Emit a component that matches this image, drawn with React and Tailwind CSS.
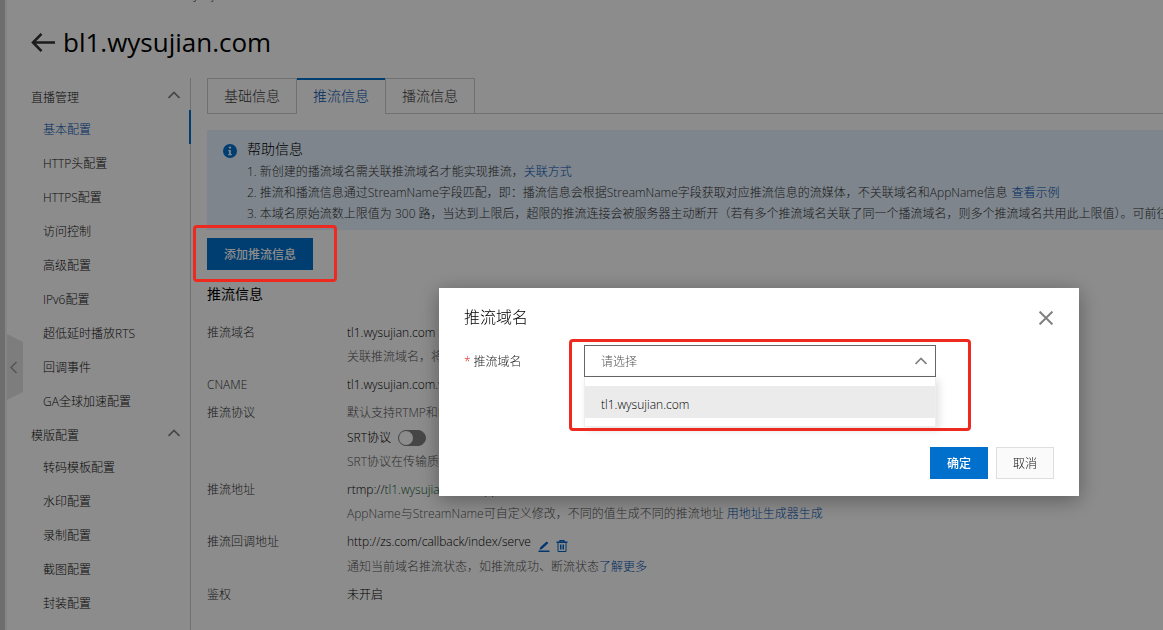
import { useState } from 'react';

const menu = [
  {
    title: '直播管理',
    items: ['基本配置', 'HTTP头配置', 'HTTPS配置', '访问控制', '高级配置', 'IPv6配置', '超低延时播放RTS', '回调事件', 'GA全球加速配置'],
  },
  {
    title: '模版配置',
    items: ['转码模板配置', '水印配置', '录制配置', '截图配置', '封装配置'],
  },
];

const tabs = ['基础信息', '推流信息', '播流信息'];

function ChevronUp() {
  return (
    <svg className="w-3 h-3" viewBox="0 0 12 12" fill="none" stroke="currentColor" strokeWidth="1.7">
      <path d="M0.5 9 L6 3.4 L11.5 9" />
    </svg>
  );
}

function Sidebar() {
  const [active, setActive] = useState('基本配置');

  return (
    <nav className="w-[184px] shrink-0 border-r border-[#cccccc] pl-6">
      {menu.map((group) => (
        <div key={group.title}>
          <button className="flex h-8 w-full items-center justify-between pt-2 pr-2.5 text-[#111111]">
            {group.title}
            <span className="pb-1.5 text-[#808080]"><ChevronUp /></span>
          </button>
          <ul>
            {group.items.map((item) => (
              <li key={item}>
                <a
                  href="#"
                  onClick={() => setActive(item)}
                  className={`-mr-px flex h-[34px] items-center pl-3 pt-1.5 ${item === active ? 'border-r-2 border-[#0070cc] text-[#0050b0]' : 'text-[#111111]'}`}
                >
                  {item}
                </a>
              </li>
            ))}
          </ul>
        </div>
      ))}
    </nav>
  );
}

function Tabs() {
  const [current, setCurrent] = useState('推流信息');

  return (
    <div className="flex h-9">
      {tabs.map((tab) => (
        <button
          key={tab}
          onClick={() => setCurrent(tab)}
          className={`px-4 text-sm ${
            tab === current
              ? 'border-y-2 border-t-[#0070cc] border-b-transparent text-[#0050b0]'
              : 'border border-[#cccccc] text-[#333333]'
          }`}
        >
          {tab}
        </button>
      ))}
      <div className="grow border-b border-[#cccccc]" />
    </div>
  );
}

function HelpPanel() {
  return (
    <section className="mt-4 flex h-[100px] bg-[#e6f2ff] pl-4 whitespace-nowrap text-[#333333]">
      <svg className="mt-[14px] mr-[10px] w-[14px] h-[14px] shrink-0" viewBox="0 0 14 14">
        <circle cx="7" cy="7" r="7" fill="#0070cc" />
        <circle cx="7" cy="3.6" r="1.2" fill="#e6f2ff" />
        <path d="M5.2 6h2.7v4h1v1.2H5.1V10h1V7.2h-.9z" fill="#e6f2ff" />
      </svg>
      <div className="pt-2">
        <h2 className="pb-px text-sm leading-[22px] text-black">帮助信息</h2>
        <p className="leading-[21px]">
          1. 新创建的播流域名需关联推流域名才能实现推流，<a href="#" className="text-[#0050b0]">关联方式</a>
        </p>
        <p className="leading-[21px]">
          2. 推流和播流信息通过StreamName字段匹配，即：播流信息会根据StreamName字段获取对应推流信息的流媒体，不关联域名和AppName信息
          <a href="#" className="ml-1 text-[#0050b0]">查看示例</a>
        </p>
        <p className="leading-[21px]">
          3. 本域名原始流数上限值为 300 路，当达到上限后，超限的推流连接会被服务器主动断开（若有多个推流域名关联了同一个播流域名，则多个推流域名共用此上限值）。可前往
        </p>
      </div>
    </section>
  );
}

function Row({ label, children }) {
  return (
    <div className="flex leading-6">
      <dt className="w-[140px] shrink-0 text-[#333333]">{label}</dt>
      <dd className="min-w-0 text-black">{children}</dd>
    </div>
  );
}

function Hint({ children }) {
  return <p className="whitespace-nowrap text-[#555555]">{children}</p>;
}

function StreamInfo() {
  return (
    <dl className="mt-4 flex flex-col gap-1">
      <Row label="推流域名">
        <p>tl1.wysujian.com</p>
        <Hint>关联推流域名，将</Hint>
      </Row>
      <Row label="CNAME">tl1.wysujian.com.w</Row>
      <Row label="推流协议">
        <Hint>默认支持RTMP和RTS</Hint>
        <label className="flex h-[25px] items-center">
          SRT协议
          <input type="checkbox" className="peer sr-only" />
          <span className="ml-[7px] flex h-4 w-7 rounded-full border border-[#808080] bg-[#808080]">
            <span className="w-3.5 h-3.5 rounded-full bg-white" />
          </span>
        </label>
        <Hint>SRT协议在传输质</Hint>
      </Row>
      <Row label="推流地址">
        <p>
          rtmp://<span className="text-[#0d5c30]">tl1.wysujian.com</span>/AppName/StreamName
        </p>
        <Hint>
          AppName与StreamName可自定义修改，不同的值生成不同的推流地址 <a href="#" className="text-[#0050b0]">用地址生成器生成</a>
        </Hint>
      </Row>
      <Row label="推流回调地址">
        <div className="flex h-[25px]">
          http://zs.com/callback/index/serve
          <button aria-label="编辑" className="ml-[7px] pt-1.5 text-[#0064c8]">
            <svg className="w-3 h-3" viewBox="0 0 12 12" fill="currentColor">
              <path d="M0.5 10.6h11V12h-11zM1.4 9.8l.9-2.6L8.6 1.4l1.8 1.6L4 9z" />
            </svg>
          </button>
          <button aria-label="删除" className="ml-1.5 pt-1.5 text-[#0064c8]">
            <svg className="w-3 h-3" viewBox="0 0 12 12" fill="none" stroke="currentColor">
              <path d="M0.5 2.2h11M4 2.2V.6h4v1.6" strokeWidth="1.4" />
              <path d="M2 3v8.5h8V3M4.5 4.5v5M6 4.5v5M7.5 4.5v5" />
            </svg>
          </button>
        </div>
        <Hint>
          通知当前域名推流状态，如推流成功、断流状态<a href="#" className="text-[#0050b0]">了解更多</a>
        </Hint>
      </Row>
      <Row label="鉴权">未开启</Row>
    </dl>
  );
}

function DomainDialog() {
  return (
    <div className="fixed inset-0 z-20 flex items-start justify-end bg-black/45 pt-72 pr-[84px]">
      <div role="dialog" aria-labelledby="dialog-title" className="w-[640px] bg-white px-[25px] pt-4 pb-[17px] shadow-[0_4px_20px_rgba(0,0,0,0.35)]">
        <div className="flex h-[26px] items-center justify-between">
          <h2 id="dialog-title" className="text-base font-light text-black">推流域名</h2>
          <button aria-label="关闭" className="mt-0.5 mr-px text-[#808080]">
            <svg className="block w-3.5 h-3.5" viewBox="0 0 14 14" fill="none" stroke="currentColor" strokeWidth="2">
              <path d="M0.6 0.6l12.8 12.8M13.4 0.6L0.6 13.4" />
            </svg>
          </button>
        </div>

        <div className="mt-[15px] flex">
          <label htmlFor="domain" className="w-[120px] pt-px leading-8 text-[#222222]">
            <span className="mr-[3px] text-[#d93026]">*</span>推流域名
          </label>
          <div className="relative w-[352px]">
            <select id="domain" className="block h-8 w-full appearance-none border border-[#666666] bg-white px-4 pt-0.5 text-[#555555]">
              <option>请选择</option>
            </select>
            <span className="pointer-events-none absolute top-2.5 right-[9px] text-[#808080]"><ChevronUp /></span>
            <ul role="listbox" className="absolute top-8 left-0 w-full border border-t-0 border-[#eeeeee] bg-white py-2 pt-[9px] shadow-[3px_3px_8px_rgba(0,0,0,0.12)]">
              <li role="option" aria-selected="true" className="h-8 bg-[#ebebeb] px-4 pt-1 leading-[30px] text-black">
                tl1.wysujian.com
              </li>
            </ul>
            {/* Highlight */}
            <div className="pointer-events-none absolute -top-1.5 -left-[15px] h-[92px] w-[402px] rounded border-3 border-[#ee2a20]" />
          </div>
        </div>

        <div className="mt-[69px] flex justify-end gap-2">
          <button className="h-8 w-[58px] bg-[#0070cc] pt-0.5 font-medium text-white">确定</button>
          <button className="h-8 w-[58px] border border-[#dedede] bg-[#fafafa] pt-0.5 text-[#111111]">取消</button>
        </div>
      </div>
    </div>
  );
}

export default function App() {
  return (
    <div className="flex h-screen overflow-hidden bg-white font-['Open_Sans','Noto_Sans_CJK_SC',sans-serif] text-xs font-light">
      <div className="w-[7px] shrink-0 border-r-2 border-[#f2f2f2] bg-[#c8c8c8]" />
      <div className="relative min-w-0 grow">
        {/* Breadcrumb, scrolled almost out of view */}
        <div className="flex h-[2px] items-end overflow-hidden pl-[158px] text-[#333333]">
          <span className="leading-[14px]">bl1.wysujian.com</span>
        </div>

        <header className="flex h-[76px] items-center gap-2 pl-6 pb-0.5 pt-1.5 text-black">
          <button aria-label="返回" className="text-[#333333]">
            <svg className="w-6 h-5" viewBox="0 0 24 20" fill="none" stroke="currentColor" strokeWidth="2.6">
              <path d="M2 10.5H24M10.5 1.9L2 10.5l8.5 8.6" />
            </svg>
          </button>
          <h1 className="text-[26px] leading-9 font-normal">bl1.wysujian.com</h1>
        </header>

        <div className="flex h-full">
          <Sidebar />
          <main className="min-w-0 grow overflow-x-clip pl-4">
            <Tabs />
            <HelpPanel />
            <div className="relative mt-2 w-fit">
              <button className="block h-8 bg-[#0070cc] px-[17px] pt-0.5 font-medium text-white">添加推流信息</button>
              {/* Highlight */}
              <div className="pointer-events-none absolute -top-[13px] -left-3.5 z-30 h-[57px] w-36 rounded border-3 border-[#ee2a20]" />
            </div>
            <h3 className="mt-[13px] text-sm leading-[22px] font-normal text-black">推流信息</h3>
            <StreamInfo />
          </main>
        </div>

        {/* Sidebar collapse handle */}
        <button aria-label="收起菜单" className="absolute top-[334px] left-0 h-[66px] w-4">
          <svg className="w-4 h-[66px]" viewBox="0 0 16 66" fill="none">
            <path d="M0 0L16 8v50L0 66z" fill="#e4e4e4" />
            <path d="M9.5 28L4 33.5 9.5 39" stroke="#999999" strokeWidth="1.5" />
          </svg>
        </button>
      </div>
      <DomainDialog />
    </div>
  );
}
